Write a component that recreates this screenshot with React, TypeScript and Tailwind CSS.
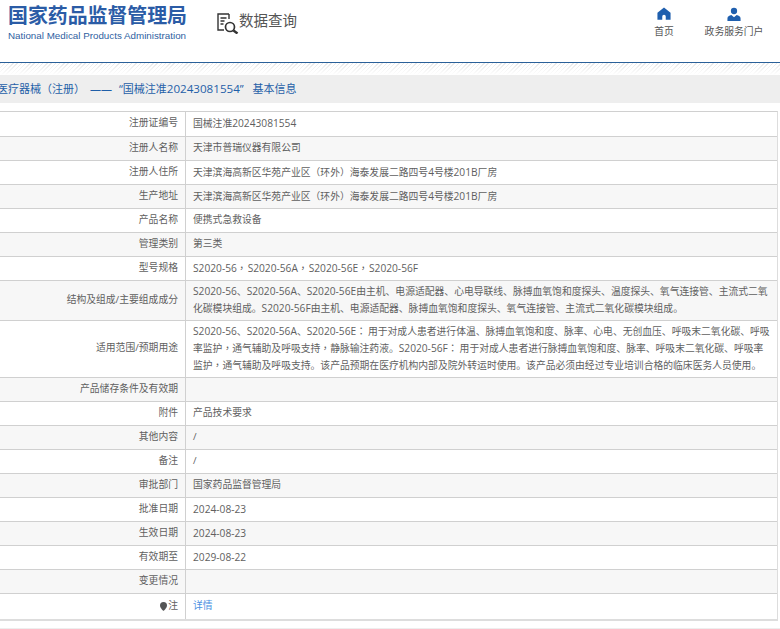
const rows: { label: string; value?: string; h: string; link?: boolean; pin?: boolean }[] = [
  { label: "注册证编号", value: "国械注准20243081554", h: "h-[24px]" },
  { label: "注册人名称", value: "天津市普瑞仪器有限公司", h: "h-[24px]" },
  { label: "注册人住所", value: "天津滨海高新区华苑产业区（环外）海泰发展二路四号4号楼201B厂房", h: "h-[24px]" },
  { label: "生产地址", value: "天津滨海高新区华苑产业区（环外）海泰发展二路四号4号楼201B厂房", h: "h-[24px]" },
  { label: "产品名称", value: "便携式急救设备", h: "h-[24px]" },
  { label: "管理类别", value: "第三类", h: "h-[24px]" },
  { label: "型号规格", value: "S2020-56，S2020-56A，S2020-56E，S2020-56F", h: "h-[24px]" },
  { label: "结构及组成/主要组成成分", value: "S2020-56、S2020-56A、S2020-56E由主机、电源适配器、心电导联线、脉搏血氧饱和度探头、温度探头、氧气连接管、主流式二氧化碳模块组成。S2020-56F由主机、电源适配器、脉搏血氧饱和度探头、氧气连接管、主流式二氧化碳模块组成。", h: "h-[40px]" },
  { label: "适用范围/预期用途", value: "S2020-56、S2020-56A、S2020-56E：用于对成人患者进行体温、脉搏血氧饱和度、脉率、心电、无创血压、呼吸末二氧化碳、呼吸率监护，通气辅助及呼吸支持，静脉输注药液。S2020-56F：用于对成人患者进行脉搏血氧饱和度、脉率、呼吸末二氧化碳、呼吸率监护，通气辅助及呼吸支持。该产品预期在医疗机构内部及院外转运时使用。该产品必须由经过专业培训合格的临床医务人员使用。", h: "h-[57px]" },
  { label: "产品储存条件及有效期", value: "", h: "h-[24px]" },
  { label: "附件", value: "产品技术要求", h: "h-[24px]" },
  { label: "其他内容", value: "/", h: "h-[24px]" },
  { label: "备注", value: "/", h: "h-[24px]" },
  { label: "审批部门", value: "国家药品监督管理局", h: "h-[24px]" },
  { label: "批准日期", value: "2024-08-23", h: "h-[24px]" },
  { label: "生效日期", value: "2024-08-23", h: "h-[24px]" },
  { label: "有效期至", value: "2029-08-22", h: "h-[24px]" },
  { label: "变更情况", value: "", h: "h-[24px]" },
  { label: "注", value: "详情", h: "h-[26px]", link: true, pin: true },
];

function Rich({ text }: { text: string }) {
  const parts = text.split(/([A-Za-z0-9-]+|[，：])/);
  return (
    <>
      {parts.map((p, i) => {
        if (i % 2 === 0) return p;
        if (p === "：") return <span key={i} className="mr-[2px] font-['Noto_Sans_CJK_TC',sans-serif]">{p}</span>;
        if (p === "，") {
          return (
            <span key={i} className={`${parts[i + 1] === "" ? "mr-px" : ""} font-['Noto_Sans_CJK_TC',sans-serif]`}>{p}</span>
          );
        }
        return <span key={i} className="text-[10.2px]">{p}</span>;
      })}
    </>
  );
}

export default function App() {
  return (
    <div className="w-[780px] h-[629px] overflow-hidden bg-white font-['Open_Sans','Noto_Sans_CJK_SC',sans-serif] text-[9.8px] text-[#5f5f5f]">
      <header className="h-[63px] flex border-b border-[#2a6099]">
        <div className="ml-2 w-[178px] pt-[2px] shrink-0">
          <div className="text-[19.9px] leading-[26px] font-bold text-[#2b5ca6] whitespace-nowrap font-['Noto_Sans_CJK_SC',sans-serif]">国家药品监督管理局</div>
          <div className="text-[9.8px] leading-[13px] mt-px text-[#2f5f9f] whitespace-nowrap font-['Liberation_Sans',sans-serif]">National Medical Products Administration</div>
        </div>
        <div className="ml-[31px] mt-[8px] h-[26px] flex items-start">
          <svg className="mt-[5px]" width="22" height="21" viewBox="0 0 22 21" fill="none" stroke="#333" strokeWidth="1.4">
            <path d="M12 1H1v16h6" />
            <path d="M12 1v5" />
            <path d="M3.5 5h6M3.5 8h4M3.5 11h3" />
            <circle cx="13" cy="14" r="4.5" strokeWidth="1.7" />
            <path d="M16.5 17.5l4 3" strokeWidth="2.4" />
          </svg>
          <span className="text-[14.5px] leading-[26px] text-[#555] whitespace-nowrap">数据查询</span>
        </div>
        <div className="ml-auto flex mr-[14px]">
          <div className="w-[40px] flex flex-col items-center pt-[7px]">
            <svg width="14" height="13" viewBox="0 0 16 14" fill="#1f5fae">
              <path d="M8 0L15.5 6.2V14H10V10.5a2 2 0 0 0-4 0V14H.5V6.2z" />
            </svg>
            <span className="mt-[5px] leading-[14px] text-[#555]">首页</span>
          </div>
          <div className="ml-[18px] w-[64px] flex flex-col items-center pt-[7px]">
            <svg width="14" height="15" viewBox="0 0 16 16" fill="#1f5fae">
              <circle cx="8" cy="4" r="3.6" />
              <path d="M0.5 15.5v-3c0-2 2-3.4 4.5-3.8L8 11l3-2.3c2.5.4 4.5 1.8 4.5 3.8v3z" />
            </svg>
            <span className="mt-[3px] leading-[14px] text-[#555] whitespace-nowrap">政务服务门户</span>
          </div>
        </div>
      </header>
      <div className="h-[12px] bg-[repeating-linear-gradient(135deg,#e8e8e8_0px,#e8e8e8_1px,#fff_1px,#fff_3px)]">
        <div className="h-full bg-gradient-to-b from-transparent to-white" />
      </div>
      <div className="h-[28px] bg-[#eeeeee] flex items-center -ml-[3px] text-[11px] text-[#1f5fa8] whitespace-nowrap">
        <span>医疗器械（注册）</span>
        <span className="ml-[5px]">——</span>
        <span className="ml-[7px]">“国械注准<span className="text-[11.6px]">20243081554</span>”</span>
        <span className="ml-[9px]">基本信息</span>
      </div>
      <div className="mt-[8px] w-[778px] border-t border-[#d0d0d0] border-b-2 border-b-[#ddd] border-r border-r-[#ddd]">
        {rows.map((r, i) => (
          <div key={r.label} className={`flex ${r.h} ${i % 2 ? "bg-[#f7f7f7]" : "bg-white"} ${i ? "border-t border-[#d0d0d0]" : ""}`}>
            <div className="w-[186px] shrink-0 border-r border-[#d0d0d0] pr-[7px] pb-px flex items-center justify-end whitespace-nowrap">
              {r.pin && (
                <svg width="7" height="9" viewBox="0 0 7 9" fill="#555" className="mr-px">
                  <path d="M3.5 0a3.5 3.5 0 0 1 3.5 3.5C7 6 3.5 9 3.5 9S0 6 0 3.5A3.5 3.5 0 0 1 3.5 0z" />
                </svg>
              )}
              <Rich text={r.label} />
            </div>
            <div className={`flex-1 pl-[7px] pr-[5.5px] pb-px flex items-center leading-[16px] ${r.link ? "text-[#4a90e2]" : ""}`}>
              <span><Rich text={r.value ?? ""} /></span>
            </div>
          </div>
        ))}
      </div>
      <div className="mt-[7px] h-px bg-[#eeeeee]" />
    </div>
  );
}
